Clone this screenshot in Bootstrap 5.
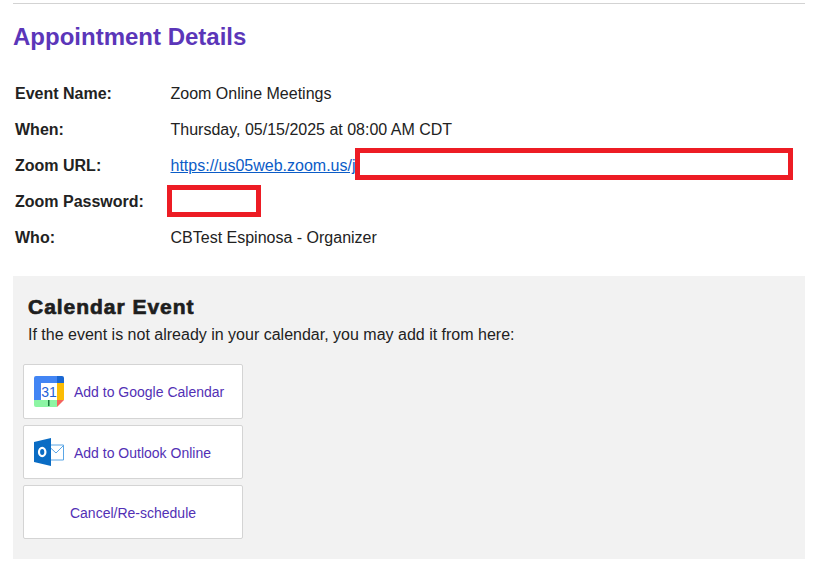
<!DOCTYPE html>
<html lang="en">
<head>
<meta charset="utf-8">
<title>Appointment Details</title>
<link href="https://cdn.jsdelivr.net/npm/bootstrap@5.3.0/dist/css/bootstrap.min.css" rel="stylesheet">
<style>
html,body{background:#fff;}
body{font-family:"Liberation Sans",Arial,sans-serif;font-size:16px;color:#222;padding:3px 12px 0 13px;line-height:1.2;}
.top-rule{border-top:1px solid #d3d3d3;margin:0;opacity:1;}
.appt-title{font-size:24px;font-weight:700;color:#5b36b9;margin:19px 0 0;line-height:27px;}
.detail-wrap{position:relative;margin-top:25px;}
.detail-row{height:36px;display:flex;align-items:center;padding:2px 0 0 2px;}
.detail-label{width:155.5px;font-weight:700;flex:none;}
.detail-row a{color:#0b5cc7;}
.redact{position:absolute;border:5px solid #ed1c24;background:#fff;}
.redact-url{left:342px;top:73px;width:438px;height:32px;}
.redact-pass{left:154px;top:110px;width:94px;height:32px;}
.cal-panel{background:#f2f2f2;margin-top:21px;height:283px;padding:19px 10px 0;}
.cal-title{font-size:21px;font-weight:700;color:#1e1e1e;margin:0 0 0 5px;line-height:24px;-webkit-text-stroke:.7px #1e1e1e;letter-spacing:.97px;}
.cal-sub{margin:5px 0 0 5px;line-height:22px;}
.cal-btns{margin-top:18px;width:220px;gap:6px;}
.cal-btn{background:#fff;border:1px solid #d4d4d4;border-radius:2px;height:54px;color:#5230b5;font-size:14px;text-decoration:none;padding-left:10px;}
.cal-btn.first{height:55px;}
.cal-btn span{padding-top:2px;}
.cal-btn.first span{padding-top:1px;}
.cal-btn svg{flex:none;margin-right:10px;}
.cal-btn.plain{justify-content:center;padding-left:0;padding-right:0;}
</style>
</head>
<body>
<hr class="top-rule">
<h1 class="appt-title">Appointment Details</h1>
<div class="detail-wrap">
  <div class="detail-row"><div class="detail-label">Event Name:</div><div>Zoom Online Meetings</div></div>
  <div class="detail-row"><div class="detail-label">When:</div><div>Thursday, 05/15/2025 at 08:00 AM CDT</div></div>
  <div class="detail-row"><div class="detail-label">Zoom URL:</div><div><a href="#">https://us05web.zoom.us/j</a></div></div>
  <div class="detail-row"><div class="detail-label">Zoom Password:</div><div></div></div>
  <div class="detail-row"><div class="detail-label">Who:</div><div>CBTest Espinosa - Organizer</div></div>
  <div class="redact redact-url"></div>
  <div class="redact redact-pass"></div>
</div>
<section class="cal-panel">
  <h2 class="cal-title">Calendar Event</h2>
  <p class="cal-sub">If the event is not already in your calendar, you may add it from here:</p>
  <div class="cal-btns d-flex flex-column">
    <a href="#" class="cal-btn first d-flex align-items-center">
      <svg width="30" height="31" viewBox="0 0 30 31">
        <path d="M2 0H23V7H7V24H0V2A2 2 0 0 1 2 0Z" fill="#4285f4"/>
        <path d="M23 0H28A2 2 0 0 1 30 2V7H23Z" fill="#1a67d2"/>
        <rect x="23" y="7" width="7" height="17" fill="#fbbc04"/>
        <path d="M0 24H23V31H2A2 2 0 0 1 0 29Z" fill="#8df5a4"/>
        <path d="M23 24H30L23 31Z" fill="#f4645c"/>
        <rect x="7" y="7" width="16" height="17" fill="#fff"/>
        <rect x="14" y="24" width="1.5" height="6" fill="#1a7a3c"/>
        <text x="15" y="20.5" text-anchor="middle" font-family="Liberation Sans" font-size="14" fill="#1f5fd8">31</text>
      </svg>
      <span>Add to Google Calendar</span>
    </a>
    <a href="#" class="cal-btn d-flex align-items-center">
      <svg width="30" height="28" viewBox="0 0 30 28">
        <path d="M14 7H29.5V22H14Z" fill="#fff" stroke="#5ba6e6" stroke-width="1"/>
        <path d="M14 7.5L22 15L29.5 7.5" fill="none" stroke="#5ba6e6" stroke-width="1"/>
        <path d="M0 4L17 0V28L0 24Z" fill="#0a6cc4"/>
        <ellipse cx="8.2" cy="14" rx="3.2" ry="4.1" fill="none" stroke="#fff" stroke-width="2.2"/>
      </svg>
      <span>Add to Outlook Online</span>
    </a>
    <a href="#" class="cal-btn plain d-flex align-items-center"><span>Cancel/Re-schedule</span></a>
  </div>
</section>
<script src="https://cdn.jsdelivr.net/npm/bootstrap@5.3.0/dist/js/bootstrap.bundle.min.js"></script>
</body>
</html>
